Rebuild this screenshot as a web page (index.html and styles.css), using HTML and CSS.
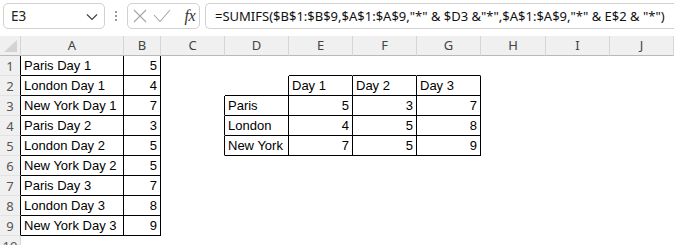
FILE: index.html
```html
<!DOCTYPE html>
<html>
<head>
<meta charset="utf-8">
<link rel="stylesheet" href="styles.css">
</head>
<body>
<div class="toolbar">
  <div class="namebox">
    <span class="name">E3</span>
    <svg class="chev" width="12" height="8" viewBox="0 0 12 8"><path d="M1 1.5 L6 6.5 L11 1.5" fill="none" stroke="#444" stroke-width="1.2"/></svg>
  </div>
  <div class="dots"><i></i><i></i><i></i></div>
  <div class="fxbox">
    <svg width="14" height="14" viewBox="0 0 14 14"><path d="M1 1 L13 13 M13 1 L1 13" stroke="#a6a6a6" stroke-width="1.1" fill="none"/></svg>
    <svg width="18" height="14" viewBox="0 0 18 14"><path d="M1 6 L7 12.5 L17 1" stroke="#a6a6a6" stroke-width="1.1" fill="none"/></svg>
    <span class="fx">fx</span>
  </div>
  <div class="formula">=SUMIFS($B$1:$B$9,$A$1:$A$9,"*" &amp; $D3 &amp;"*",$A$1:$A$9,"*" &amp; E$2 &amp; "*")</div>
</div>
<div class="sheet">
  <div class="corner"><span class="tri"></span></div>
  <div class="ch">A</div><div class="ch">B</div><div class="ch">C</div><div class="ch">D</div><div class="ch">E</div><div class="ch">F</div><div class="ch">G</div><div class="ch">H</div><div class="ch">I</div><div class="ch">J</div><div class="ch last"></div>

  <div class="rh k">1</div><div class="c r b">Paris Day 1</div><div class="c n r b">5</div><div class="c"></div><div class="c"></div><div class="c b"></div><div class="c b"></div><div class="c b"></div><div class="c"></div><div class="c"></div><div class="c"></div><div class="c"></div>

  <div class="rh k">2</div><div class="c r b">London Day 1</div><div class="c n r b">4</div><div class="c"></div><div class="c r b"></div><div class="c r b">Day 1</div><div class="c r b">Day 2</div><div class="c r b">Day 3</div><div class="c"></div><div class="c"></div><div class="c"></div><div class="c"></div>

  <div class="rh k">3</div><div class="c r b">New York Day 1</div><div class="c n r b">7</div><div class="c r"></div><div class="c r b">Paris</div><div class="c n r b">5</div><div class="c n r b">3</div><div class="c n r b">7</div><div class="c"></div><div class="c"></div><div class="c"></div><div class="c"></div>

  <div class="rh k">4</div><div class="c r b">Paris Day 2</div><div class="c n r b">3</div><div class="c r"></div><div class="c r b">London</div><div class="c n r b">4</div><div class="c n r b">5</div><div class="c n r b">8</div><div class="c"></div><div class="c"></div><div class="c"></div><div class="c"></div>

  <div class="rh k">5</div><div class="c r b">London Day 2</div><div class="c n r b">5</div><div class="c r"></div><div class="c r b">New York</div><div class="c n r b">7</div><div class="c n r b">5</div><div class="c n r b">9</div><div class="c"></div><div class="c"></div><div class="c"></div><div class="c"></div>

  <div class="rh k">6</div><div class="c r b">New York Day 2</div><div class="c n r b">5</div><div class="c"></div><div class="c"></div><div class="c"></div><div class="c"></div><div class="c"></div><div class="c"></div><div class="c"></div><div class="c"></div><div class="c"></div>

  <div class="rh k">7</div><div class="c r b">Paris Day 3</div><div class="c n r b">7</div><div class="c"></div><div class="c"></div><div class="c"></div><div class="c"></div><div class="c"></div><div class="c"></div><div class="c"></div><div class="c"></div><div class="c"></div>

  <div class="rh k">8</div><div class="c r b">London Day 3</div><div class="c n r b">8</div><div class="c"></div><div class="c"></div><div class="c"></div><div class="c"></div><div class="c"></div><div class="c"></div><div class="c"></div><div class="c"></div><div class="c"></div>

  <div class="rh k">9</div><div class="c r b">New York Day 3</div><div class="c n r b">9</div><div class="c"></div><div class="c"></div><div class="c"></div><div class="c"></div><div class="c"></div><div class="c"></div><div class="c"></div><div class="c"></div><div class="c"></div>

  <div class="rh">10</div><div class="c"></div><div class="c"></div><div class="c"></div><div class="c"></div><div class="c"></div><div class="c"></div><div class="c"></div><div class="c"></div><div class="c"></div><div class="c"></div><div class="c"></div>
</div>
</body>
</html>
```
FILE: styles.css
```css
* { box-sizing: border-box; }
html, body { margin: 0; padding: 0; background: #fff; overflow: hidden; }
body { width: 674px; height: 245px; }

.toolbar {
  height: 36px;
  display: flex;
  align-items: flex-start;
  padding: 3px 0 0 3px;
  background: #fff;
  font-family: "Noto Sans", "Open Sans", sans-serif;
}
.namebox {
  width: 102px;
  height: 26px;
  border: 1px solid #d1d1d1;
  border-radius: 5px;
  display: flex;
  align-items: center;
  justify-content: space-between;
  padding: 0 6px 0 7px;
  font-size: 13.5px;
  color: #222;
}
.chev { margin-top: 1px; }
.dots {
  width: 22px;
  height: 26px;
  display: flex;
  flex-direction: column;
  align-items: center;
  justify-content: center;
  gap: 2px;
}
.dots i { width: 2px; height: 2px; background: #9a9a9a; display: block; }
.fxbox {
  width: 73px;
  height: 26px;
  border: 1px solid #d1d1d1;
  border-radius: 5px;
  display: flex;
  align-items: center;
  padding: 0 4px 0 5px;
  gap: 6px;
}
.fx {
  margin-left: auto;
  font-family: "Liberation Serif", "DejaVu Serif", serif;
  font-style: italic;
  font-size: 16px;
  color: #333;
  letter-spacing: -0.5px;
}
.formula {
  margin-left: 5px;
  flex: 1;
  height: 26px;
  border: 1px solid #d1d1d1;
  border-right: none;
  border-radius: 5px 0 0 5px;
  padding-left: 9px;
  font-size: 13px;
  line-height: 24px;
  color: #111;
  white-space: nowrap;
  overflow: hidden;
}

.sheet {
  display: grid;
  grid-template-columns: 21px 103px 37px 64px 64px 64px 64px 64px 65px 64px 64px 1fr;
  grid-auto-rows: 20px;
}
.corner, .ch, .rh {
  background: #f0f0f0;
  color: #444;
  font-family: "Noto Sans", "Open Sans", sans-serif;
  font-size: 13px;
}
.corner {
  position: relative;
  border-right: 1px solid #d6d6d6;
  border-bottom: 1px solid #b9b9b9;
}
.tri {
  position: absolute;
  right: 3px;
  bottom: 3px;
  width: 0; height: 0;
  border-left: 13px solid transparent;
  border-bottom: 12px solid #d3d3d3;
}
.ch {
  border-right: 1px solid #d6d6d6;
  border-bottom: 1px solid #b9b9b9;
  text-align: center;
  line-height: 19px;
}
.ch.last { border-right: none; }
.rh {
  border-right: 1px solid #d6d6d6;
  border-bottom: 1px solid #e2e2e2;
  text-align: center;
  line-height: 20px;
  color: #555;
}
.rh.k { border-right-color: #000; }
.c {
  border-right: 1px solid transparent;
  border-bottom: 1px solid transparent;
  font-family: "Liberation Sans", Arial, sans-serif;
  font-size: 13px;
  line-height: 19px;
  color: #000;
  padding: 0 3px;
  white-space: nowrap;
  overflow: hidden;
}
.c.n { text-align: right; }
.c.r { border-right-color: #000; }
.c.b { border-bottom-color: #000; }
```
